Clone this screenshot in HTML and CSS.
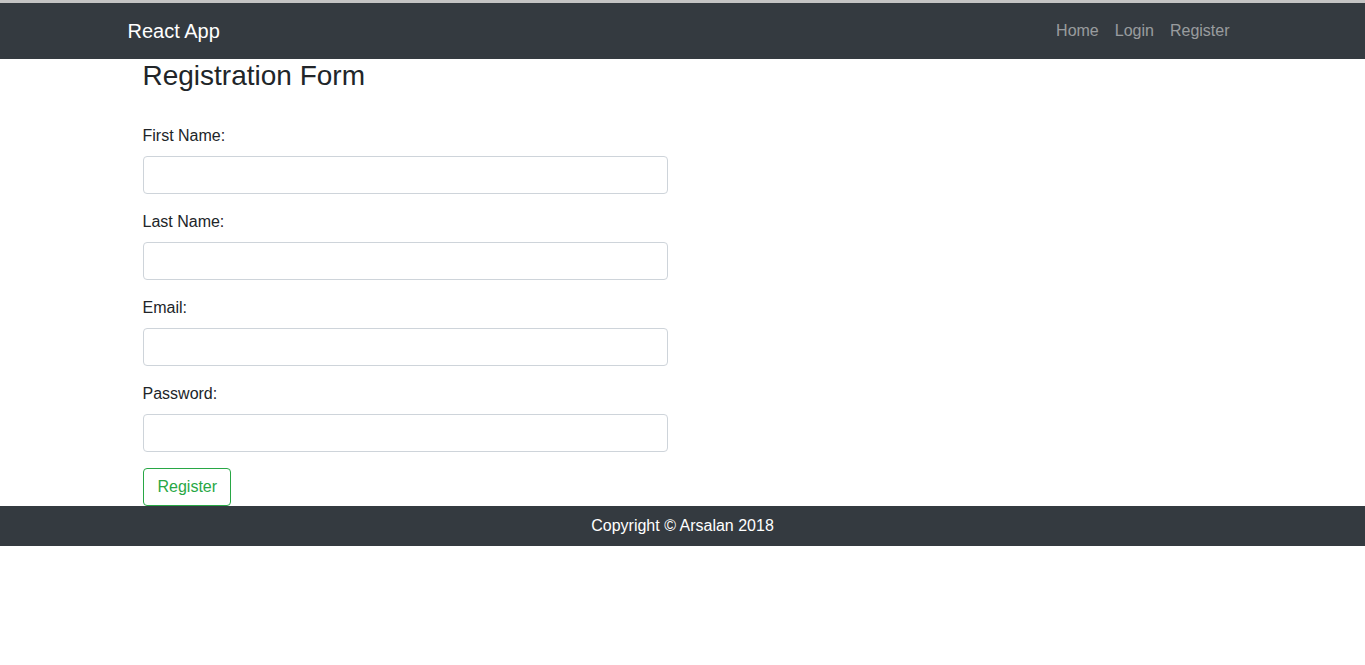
FILE: index.html
```html
<!DOCTYPE html>
<html lang="en">
<head>
<meta charset="utf-8">
<title>React App</title>
<link rel="stylesheet" href="styles.css">
</head>
<body>
<div class="topline"></div>
<nav class="navbar">
  <div class="nav-inner">
    <a class="brand" href="#">React App</a>
    <ul class="nav-links">
      <li><a href="#">Home</a></li>
      <li><a href="#">Login</a></li>
      <li><a href="#">Register</a></li>
    </ul>
  </div>
</nav>
<main class="container">
  <h3 class="title">Registration Form</h3>
  <form class="form">
    <div class="form-group">
      <label>First Name:</label>
      <input class="form-control" type="text">
    </div>
    <div class="form-group">
      <label>Last Name:</label>
      <input class="form-control" type="text">
    </div>
    <div class="form-group">
      <label>Email:</label>
      <input class="form-control" type="email">
    </div>
    <div class="form-group">
      <label>Password:</label>
      <input class="form-control" type="password">
    </div>
    <button type="button" class="btn">Register</button>
  </form>
</main>
<footer class="footer">Copyright © Arsalan 2018</footer>
</body>
</html>
```
FILE: styles.css
```css
* { box-sizing: border-box; }
html, body { margin: 0; padding: 0; }
body {
  font-family: "Liberation Sans", Arial, sans-serif;
  font-size: 16px;
  line-height: 1.5;
  color: #212529;
  background: #fff;
}
.topline { height: 3px; background: #c4c4c4; }
.navbar { background: #343a40; height: 56px; }
.nav-inner {
  width: 1140px;
  margin: 0 auto;
  padding: 0 15px;
  height: 56px;
  display: flex;
  align-items: center;
  justify-content: space-between;
}
.brand {
  color: #fff;
  font-size: 20px;
  line-height: 30px;
  text-decoration: none;
  margin-top: -1px;
}
.nav-links {
  list-style: none;
  margin: 0;
  padding: 0;
  display: flex;
}
.nav-links a {
  display: block;
  padding: 8px;
  color: rgba(255, 255, 255, 0.5);
  text-decoration: none;
  line-height: 24px;
  margin-top: -1px;
}
.container {
  width: 1140px;
  margin: 0 auto;
  padding: 0 30px;
}
.title {
  font-size: 28px;
  font-weight: 400;
  line-height: 1.2;
  margin: 0 0 31px;
}
.form { width: 525px; }
.form-group { margin-bottom: 16px; }
label { display: block; margin-bottom: 8px; }
.form-control {
  display: block;
  width: 100%;
  height: 38px;
  padding: 6px 12px;
  font-size: 16px;
  border: 1px solid #ced4da;
  border-radius: 4px;
  background: #fff;
}
.btn {
  font-family: inherit;
  font-size: 16px;
  line-height: 24px;
  padding: 6px 13px 6px 14px;
  color: #28a745;
  background: transparent;
  border: 1px solid #28a745;
  border-radius: 4px;
  display: block;
}
.footer {
  background: #343a40;
  color: #fff;
  text-align: center;
  height: 40px;
  line-height: 40px;
}
```
